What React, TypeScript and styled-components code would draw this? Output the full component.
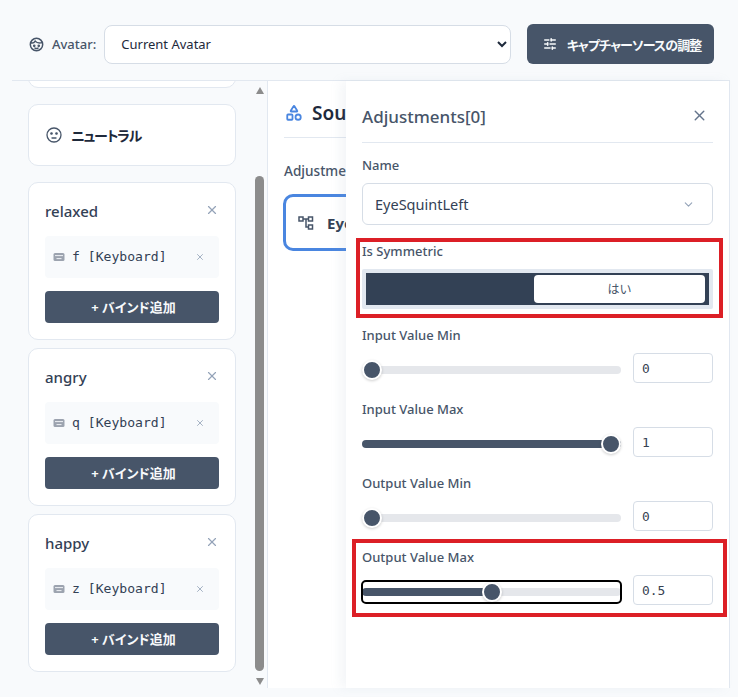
import React from "react";
import styled, { createGlobalStyle } from "styled-components";
import { ChevronDown, Shapes, SlidersHorizontal, X } from "lucide-react";

const Global = createGlobalStyle`
  * { box-sizing: border-box; }
  html, body { margin: 0; padding: 0; background: #f8fafc; height: 100%; overflow: hidden; }
  body { font-family: "Noto Sans", "Noto Sans CJK JP", sans-serif; color: #334155; }
`;

const Page = styled.div`
  width: 738px;
  height: 697px;
  padding: 24px 8px 9px 12px;
  display: flex;
  flex-direction: column;
  gap: 16px;
`;

const Header = styled.header`
  display: flex;
  align-items: center;
  height: 40px;
  padding: 0 16px;
  gap: 16px;
`;

const AvatarGroup = styled.div`
  display: flex;
  align-items: center;
  flex: 1;
  gap: 8px;
`;

const AvatarLabel = styled.label`
  display: flex;
  align-items: center;
  gap: 8px;
  margin-left: 1px;
  font-size: 13px;
  font-weight: 500;
  color: #475569;
`;

const AvatarSelect = styled.select`
  flex: 1;
  height: 39px;
  border: 1px solid #d6dde6;
  border-radius: 8px;
  background: #fff;
  padding: 0 0 0 12px;
  font-family: inherit;
  font-size: 13px;
  color: #1e293b;
`;

const PrimaryButton = styled.button`
  display: flex;
  align-items: center;
  justify-content: center;
  gap: 10px;
  width: 187px;
  height: 40px;
  padding: 0 0 0 3px;
  border: none;
  border-radius: 6px;
  background: #475569;
  color: #f8fafc;
  font-family: inherit;
  font-size: 13px;
  font-weight: 700;
  white-space: nowrap;
  font-feature-settings: "palt";
  letter-spacing: -0.9px;
`;

const Main = styled.main`
  position: relative;
  flex: 1;
  min-height: 0;
  display: flex;
  border-top: 1px solid #e2e8f0;
  border-right: 1px solid #e2e8f0;
`;

const Sidebar = styled.aside`
  position: relative;
  width: 256px;
  flex: none;
  border-right: 1px solid #e2e8f0;
  padding: 0 31px 16px 16px;
  display: flex;
  flex-direction: column;
  justify-content: flex-end;
  overflow: hidden;
`;

const Card = styled.section<{ $gap?: number }>`
  flex: none;
  width: 208px;
  background: #fff;
  border: 1px solid #e2e8f0;
  border-radius: 10px;
  margin-bottom: ${(p) => p.$gap ?? 8}px;
  &:last-of-type { margin-bottom: 0; }
`;

const ClippedCard = styled(Card)`
  height: 60px;
`;

const NeutralCard = styled(Card)`
  height: 62px;
  display: flex;
  align-items: center;
  gap: 9px;
  padding: 0 17px;
  font-size: 14px;
  font-weight: 700;
  color: #1e293b;
  font-feature-settings: "palt";
  letter-spacing: -1.2px;
`;

const BindCard = styled(Card)`
  height: 158px;
  padding: 15px 16px 16px;
  display: flex;
  flex-direction: column;
`;

const BindHead = styled.div`
  display: flex;
  align-items: center;
  justify-content: space-between;
  height: 24px;
  margin-bottom: 14px;
`;

const BindName = styled.h3`
  margin: 0;
  font-size: 15px;
  font-weight: 500;
  color: #334155;
  line-height: 24px;
  padding-top: 1px;
`;

const BindRow = styled.div`
  display: flex;
  align-items: center;
  height: 42px;
  padding: 0 14px 0 8px;
  background: #f8fafc;
  border-radius: 4px;
  margin-bottom: 13px;
`;

const BindText = styled.span`
  flex: 1;
  margin-left: 7px;
  padding-bottom: 2px;
  font-family: "DejaVu Sans Mono", monospace;
  font-size: 13.1px;
  color: #334155;
`;

const AddButton = styled.button`
  height: 32px;
  padding: 0 0 2px 3px;
  border: none;
  border-radius: 4px;
  background: #475569;
  color: #f8fafc;
  font-family: inherit;
  font-size: 13px;
  font-weight: 700;
  font-feature-settings: "palt";
`;

const Scrollbar = styled.div`
  position: absolute;
  top: 0;
  bottom: 0;
  right: 3px;
  width: 9px;
  display: flex;
  flex-direction: column;
  align-items: center;
  justify-content: space-between;
  padding: 6px 0 3px;
`;

const ScrollThumb = styled.div`
  position: absolute;
  left: 0;
  right: 0;
  top: 95px;
  bottom: 17px;
  background: #8c8c8c;
  border-radius: 5px;
`;

const ScrollArrow = styled.div<{ $up?: boolean }>`
  width: 0;
  height: 0;
  border-left: 4.5px solid transparent;
  border-right: 4.5px solid transparent;
  ${(p) => (p.$up ? "border-bottom: 7px solid #8c8c8c;" : "border-top: 7px solid #8c8c8c;")}
`;

const Content = styled.div`
  flex: 1;
  background: #fff;
  padding: 16px;
`;

const SectionTitle = styled.h2`
  display: flex;
  align-items: center;
  gap: 9px;
  height: 41px;
  margin: 0 0 24px;
  padding: 0 0 9px 1px;
  border-bottom: 1px solid #e2e8f0;
  font-size: 19px;
  font-weight: 600;
  color: #1e293b;
  white-space: nowrap;
`;

const SubLabel = styled.div`
  font-size: 13.6px;
  font-weight: 500;
  color: #475569;
  line-height: 18px;
  margin-bottom: 14px;
  white-space: nowrap;
`;

const AdjustCard = styled.div`
  display: flex;
  align-items: center;
  gap: 13px;
  width: 120px;
  height: 57px;
  border: 3px solid #4a86e0;
  border-radius: 10px;
  padding: 0 12px;
  font-size: 15px;
  font-weight: 700;
  color: #334155;
  margin-left: -1px;
`;

const Drawer = styled.div`
  position: absolute;
  top: 0;
  bottom: 0;
  left: 334px;
  right: 0;
  background: #fff;
  padding: 16px;
  box-shadow: -6px 0 10px rgba(148, 163, 184, 0.1);
`;

const DrawerHead = styled.div`
  display: flex;
  align-items: center;
  justify-content: space-between;
  height: 46px;
  padding: 0 5px 9px 0;
  border-bottom: 1px solid #e2e8f0;
  margin-bottom: 13px;
`;

const DrawerTitle = styled.h2`
  margin: 0;
  padding-top: 3px;
  font-size: 17px;
  font-weight: 500;
  color: #475569;
`;

const Field = styled.div<{ $mb?: number }>`
  margin-bottom: ${(p) => p.$mb ?? 0}px;
`;

const FieldLabel = styled.div`
  font-size: 13px;
  font-weight: 500;
  color: #475569;
  line-height: 18px;
  margin-bottom: 9px;
`;

const ComboBox = styled.div`
  display: flex;
  align-items: center;
  justify-content: space-between;
  height: 42px;
  padding: 0 17px 0 12px;
  border: 1px solid #d6dde6;
  border-radius: 6px;
  font-size: 14.5px;
  color: #334155;
`;

const Toggle = styled.div`
  display: flex;
  height: 40px;
  padding: 4px;
  background: #e2e8f0;
  border-radius: 2px;
`;

const ToggleTrack = styled.div`
  flex: 1;
  display: flex;
  justify-content: flex-end;
  padding: 2px 4px 2px 0;
  background: #334155;
`;

const ToggleThumb = styled.div`
  width: 171px;
  display: flex;
  align-items: center;
  justify-content: center;
  background: #fff;
  border-radius: 4px;
  font-size: 12px;
  color: #475569;
`;

const SliderRow = styled.div`
  display: flex;
  align-items: center;
  gap: 12px;
  margin-top: 9px;
`;

const Range = styled.input<{ $focused?: boolean }>`
  -webkit-appearance: none;
  appearance: none;
  width: 259px;
  height: 22px;
  margin: 4px 0 0;
  background: transparent;
  border-radius: 4px;
  ${(p) => (p.$focused ? "outline: 2px solid #000; outline-offset: -1px;" : "outline: none;")}
  &::-webkit-slider-runnable-track {
    height: 8px;
    border-radius: 4px;
    background: linear-gradient(to right, #475569 var(--fill), #e5e7eb var(--fill));
  }
  &::-webkit-slider-thumb {
    -webkit-appearance: none;
    width: 20px;
    height: 20px;
    margin-top: -6px;
    border-radius: 50%;
    background: #475569;
    border: 2px solid #fff;
    box-shadow: 0 1px 3px rgba(0, 0, 0, 0.2);
  }
`;

const NumberBox = styled.input`
  width: 80px;
  height: 30px;
  padding: 0 8px;
  border: 1px solid #d6dde6;
  border-radius: 4px;
  background: #fff;
  font-family: "DejaVu Sans Mono", monospace;
  font-size: 12.9px;
  color: #374151;
`;

const RedBox = styled.div<{ $top: number; $left: number; $w: number; $h: number }>`
  position: absolute;
  top: ${(p) => p.$top}px;
  left: ${(p) => p.$left}px;
  width: ${(p) => p.$w}px;
  height: ${(p) => p.$h}px;
  border: 4px solid #dc1f26;
  pointer-events: none;
`;

const IconSlot = styled.span<{ $color: string }>`
  display: inline-flex;
  color: ${(p) => p.$color};
`;

const FaceIcon = () => (
  <svg width="15" height="15" viewBox="0 0 16 16" fill="none" stroke="#475569" strokeWidth="1.6" strokeLinecap="round">
    <circle cx="8" cy="8" r="6.6" />
    <path d="M2 6.2c2 .6 3.6-.2 4.6-1.8 1.4 1.6 4.4 2.3 7.4 1.6" />
    <circle cx="5.6" cy="9.4" r=".6" fill="#475569" />
    <circle cx="10.4" cy="9.4" r=".6" fill="#475569" />
    <path d="M6.4 11.8c1 .6 2.2.6 3.2 0" />
  </svg>
);

const NeutralIcon = () => (
  <svg width="16" height="16" viewBox="0 0 16 16" fill="none" stroke="#475569" strokeWidth="1.3" strokeLinecap="round">
    <circle cx="8" cy="8" r="7" />
    <circle cx="5.5" cy="6.5" r=".7" fill="#475569" />
    <circle cx="10.5" cy="6.5" r=".7" fill="#475569" />
    <path d="M6 11h4" />
  </svg>
);

const KeyIcon = () => (
  <svg width="12" height="12" viewBox="0 0 12 12" fill="none">
    <rect x=".5" y="2" width="11" height="8" rx="1.5" fill="#9ca3af" />
    <path d="M2 4.6h8" stroke="#eef1f4" strokeWidth="1" />
    <path d="M3.5 7.6h5" stroke="#eef1f4" strokeWidth="1" />
  </svg>
);

const TreeIcon = () => (
  <svg width="16" height="16" viewBox="0 0 16 16" fill="none" stroke="#475569" strokeWidth="1.5">
    <rect x="1" y="2" width="4" height="4" />
    <rect x="10.5" y="2" width="4" height="4" />
    <rect x="10.5" y="10" width="4" height="4" />
    <path d="M5 4h5.5M8 4v8h2.5" />
  </svg>
);

const bindings = [
  { name: "relaxed", key: "f" },
  { name: "angry", key: "q" },
  { name: "happy", key: "z" },
];

const sliders = [
  { label: "Input Value Min", value: 0 },
  { label: "Input Value Max", value: 1 },
  { label: "Output Value Min", value: 0 },
  { label: "Output Value Max", value: 0.5, focused: true },
];

const Slider = ({ label, value, focused }: { label: string; value: number; focused?: boolean }) => (
  <Field $mb={17}>
    <FieldLabel>{label}</FieldLabel>
    <SliderRow>
      <Range
        $focused={focused}
        type="range"
        min={0}
        max={1}
        step={0.01}
        defaultValue={value}
        style={{ "--fill": `${value * 100}%` } as React.CSSProperties}
      />
      <NumberBox defaultValue={String(value)} />
    </SliderRow>
  </Field>
);

export default function App() {
  return (
    <>
      <Global />
      <Page>
        <Header>
          <AvatarGroup>
            <AvatarLabel>
              <FaceIcon />
              Avatar:
            </AvatarLabel>
            <AvatarSelect defaultValue="current">
              <option value="current">Current Avatar</option>
            </AvatarSelect>
          </AvatarGroup>
          <PrimaryButton>
            <SlidersHorizontal size={14} strokeWidth={2.6} />
            キャプチャーソースの調整
          </PrimaryButton>
        </Header>
        <Main>
          <Sidebar>
            <ClippedCard $gap={16} />
            <NeutralCard $gap={16}>
              <NeutralIcon />
              ニュートラル
            </NeutralCard>
            {bindings.map((b) => (
              <BindCard key={b.name}>
                <BindHead>
                  <BindName>{b.name}</BindName>
                  <IconSlot $color="#94a3b8">
                    <X size={14} />
                  </IconSlot>
                </BindHead>
                <BindRow>
                  <KeyIcon />
                  <BindText>{b.key} [Keyboard]</BindText>
                  <IconSlot $color="#94a3b8">
                    <X size={10} />
                  </IconSlot>
                </BindRow>
                <AddButton>+ バインド追加</AddButton>
              </BindCard>
            ))}
            <Scrollbar>
              <ScrollArrow $up />
              <ScrollThumb />
              <ScrollArrow />
            </Scrollbar>
          </Sidebar>
          <Content>
            <SectionTitle>
              <Shapes size={18} color="#4a86e0" strokeWidth={2.4} />
              Sou
            </SectionTitle>
            <SubLabel>Adjustme</SubLabel>
            <AdjustCard>
              <TreeIcon />
              Eye
            </AdjustCard>
          </Content>
          <Drawer>
            <DrawerHead>
              <DrawerTitle>Adjustments[0]</DrawerTitle>
              <IconSlot $color="#64748b">
                <X size={17} />
              </IconSlot>
            </DrawerHead>
            <Field $mb={17}>
              <FieldLabel>Name</FieldLabel>
              <ComboBox>
                EyeSquintLeft
                <ChevronDown size={13} color="#94a3b8" />
              </ComboBox>
            </Field>
            <Field $mb={17}>
              <FieldLabel>Is Symmetric</FieldLabel>
              <Toggle>
                <ToggleTrack>
                  <ToggleThumb>はい</ToggleThumb>
                </ToggleTrack>
              </Toggle>
            </Field>
            {sliders.map((s) => (
              <Slider key={s.label} {...s} />
            ))}
          </Drawer>
          <RedBox $top={157} $left={344} $w={367} $h={80} />
          <RedBox $top={458} $left={340} $w={375} $h={78} />
        </Main>
      </Page>
    </>
  );
}
